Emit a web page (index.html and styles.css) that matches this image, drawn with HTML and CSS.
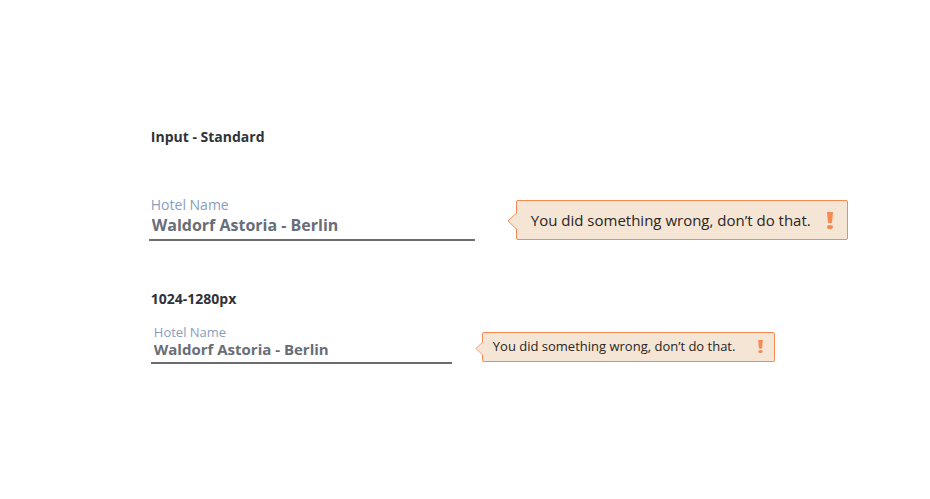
FILE: index.html
```html
<!DOCTYPE html>
<html lang="en">
<head>
<meta charset="utf-8">
<meta name="viewport" content="width=device-width, initial-scale=1">
<title>Input</title>
<link rel="stylesheet" href="styles.css">
</head>
<body>
<main class="page">
  <section class="example">
    <h2 class="title">Input - Standard</h2>
    <div class="row">
      <div class="field">
        <label class="label" for="hotel">Hotel Name</label>
        <input class="input" id="hotel" type="text" value="Waldorf Astoria - Berlin" aria-describedby="hotel-error">
      </div>
      <div class="error" id="hotel-error">
        <svg class="arrow" viewBox="0 0 10 18" aria-hidden="true"><path class="arrow-fill" d="M10 1 1 9l9 8z"/><path class="arrow-line" d="M9.500 1 1 9l8.500 8"/></svg>
        <p class="message">You did something wrong, don’t do that.</p>
        <svg class="mark" viewBox="0 0 6 17" aria-hidden="true"><path d="M0 0h6L5 11H1z"/><ellipse cx="3" cy="15" rx="3" ry="2"/></svg>
      </div>
    </div>
  </section>
  <section class="example compact">
    <h2 class="title">1024-1280px</h2>
    <div class="row">
      <div class="field">
        <label class="label" for="hotel-compact">Hotel Name</label>
        <input class="input" id="hotel-compact" type="text" value="Waldorf Astoria - Berlin" aria-describedby="hotel-compact-error">
      </div>
      <div class="error" id="hotel-compact-error">
        <svg class="arrow" viewBox="0 0 10 18" aria-hidden="true"><path class="arrow-fill" d="M10 1 1 9l9 8z"/><path class="arrow-line" d="M9.500 1 1 9l8.500 8"/></svg>
        <p class="message">You did something wrong, don’t do that.</p>
        <svg class="mark" viewBox="0 0 6 17" aria-hidden="true"><path d="M0 0h6L5 11H1z"/><ellipse cx="3" cy="15" rx="3" ry="2"/></svg>
      </div>
    </div>
  </section>
</main>
</body>
</html>
```
FILE: styles.css
```css
* {
  box-sizing: border-box;
}

body {
  margin: 0;
  background: #fff;
  color: #30333a;
  font-family: "Open Sans", "Noto Sans", sans-serif;
}

.page {
  padding: 127px 16px 64px 16%;
}

.title {
  margin: 0;
  padding-left: 2px;
  font-size: 14px;
  font-weight: 700;
  line-height: 20px;
}

.row {
  display: flex;
  align-items: flex-start;
  gap: 41px;
  margin-top: 48px;
}

.field {
  flex: 0 1 326px;
  min-width: 0;
}

.label {
  display: block;
  padding-left: 2px;
  color: #8b9dbd;
  font-size: 14px;
  line-height: 20px;
}

.input {
  display: block;
  width: 100%;
  height: 26px;
  margin: 0;
  padding: 0 3px 4px;
  border: 0;
  border-bottom: 2px solid #6b6c6f;
  border-radius: 0;
  background: transparent;
  color: #686d78;
  font: 700 16px/20px "Open Sans", "Noto Sans", sans-serif;
}

.input:focus {
  outline: 0;
  border-color: #30333a;
}

.error {
  position: relative;
  display: flex;
  flex: 0 1 332px;
  align-items: center;
  justify-content: space-between;
  min-height: 40px;
  margin-top: 5px;
  padding: 0 14px;
  border: 1px solid #f58a55;
  border-radius: 2px;
  background: #f5e5d4;
  color: #292626;
}

.message {
  margin: 0;
  font-size: 15px;
  line-height: 20px;
}

.arrow {
  position: absolute;
  top: 11px;
  left: -10px;
  width: 10px;
  height: 18px;
}

.arrow-fill {
  fill: #f5e5d4;
}

.arrow-line {
  fill: none;
  stroke: #f58a55;
}

.mark {
  width: 6px;
  height: 17px;
  fill: #f58a55;
}

.compact {
  margin-top: 48px;
}

.compact .row {
  gap: 30px;
  margin-top: 15px;
  padding-left: 2px;
}

.compact .field {
  flex-basis: 301px;
}

.compact .label {
  padding-left: 3px;
  font-size: 13px;
  line-height: 16px;
}

.compact .input {
  height: 24px;
  font-size: 15px;
}

.compact .error {
  flex-basis: 293px;
  min-height: 30px;
  margin-top: 8px;
  padding: 0 11px 2px 10px;
}

.compact .message {
  font-size: 13px;
}

.compact .arrow {
  top: 8px;
  left: -8px;
  width: 8px;
  height: 15px;
}

.compact .mark {
  width: 5px;
  height: 13px;
}
```
